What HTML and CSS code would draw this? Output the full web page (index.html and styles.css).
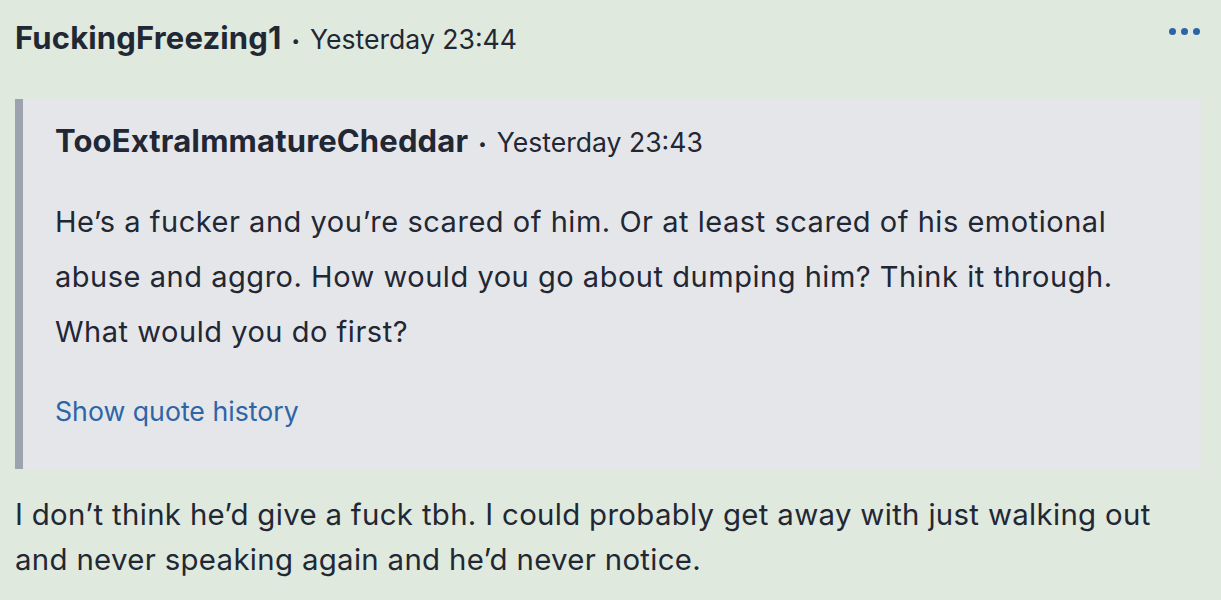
FILE: index.html
```html
<!DOCTYPE html>
<html>
<head>
<meta charset="utf-8">
<link rel="stylesheet" href="styles.css">
</head>
<body>
<div class="post">
  <div class="post-header">
    <div class="meta">
      <span class="author">FuckingFreezing1</span>
      <span class="sep">•</span>
      <span class="time">Yesterday 23:44</span>
    </div>
    <div class="more" aria-label="More options">
      <span class="dot"></span><span class="dot"></span><span class="dot"></span>
    </div>
  </div>
  <blockquote class="quote">
    <div class="meta">
      <span class="author">TooExtraImmatureCheddar</span>
      <span class="sep">•</span>
      <span class="time">Yesterday 23:43</span>
    </div>
    <p class="quote-text">He’s a fucker and you’re scared of him. Or at least scared of his emotional abuse and aggro. How would you go about dumping him? Think it through. What would you do first?</p>
    <a class="history" href="#">Show quote history</a>
  </blockquote>
  <p class="body-text">I don’t think he’d give a fuck tbh. I could probably get away with just walking out and never speaking again and he’d never notice.</p>
</div>
</body>
</html>
```
FILE: styles.css
```css
html, body {
  margin: 0;
  padding: 0;
  background: #dfe9de;
}
body {
  font-family: Inter, "Noto Sans", "Liberation Sans", sans-serif;
  color: #222734;
}
.post {
  padding: 0 20px 0 15px;
}
.post-header {
  display: flex;
  justify-content: space-between;
  align-items: flex-start;
  padding-top: 18px;
}
.meta {
  display: flex;
  align-items: baseline;
  gap: 10px;
  white-space: nowrap;
  line-height: 40px;
  height: 40px;
}
.author {
  font-weight: 700;
  font-size: 31px;
  letter-spacing: 0.15px;
}
.sep {
  font-size: 15px;
  position: relative;
  top: -3px;
}
.time {
  font-size: 26.6px;
}
.more {
  display: flex;
  gap: 5px;
  padding: 10px 1px 0 0;
}
.dot {
  width: 7px;
  height: 7px;
  border-radius: 50%;
  background: #2d64a6;
}
.quote {
  margin: 41px 0 0 0;
  background: #e5e6ea;
  border-left: 8px solid #9da3ae;
  padding: 22px 30px 40px 32px;
}
.quote-text {
  margin: 33px 0 0 0;
  font-size: 29px;
  line-height: 55px;
  letter-spacing: 0.53px;
}
.history {
  display: block;
  margin-top: 34px;
  font-size: 26.7px;
  line-height: 36px;
  color: #2d65a7;
  text-decoration: none;
}
.body-text {
  margin: 23px 0 0 0;
  font-size: 29.4px;
  line-height: 45px;
  letter-spacing: 0.32px;
}
```
